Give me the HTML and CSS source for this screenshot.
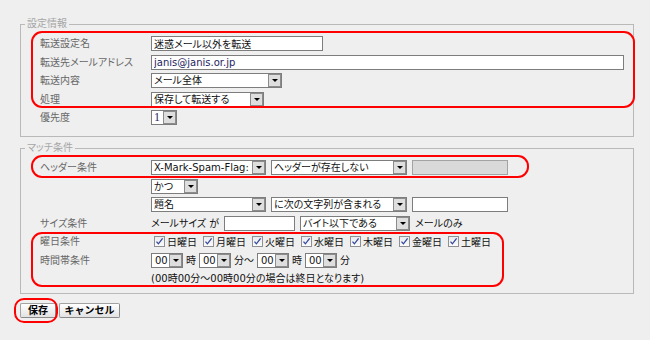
FILE: index.html
```html
<!DOCTYPE html>
<html lang="ja">
<head>
<meta charset="utf-8">
<title>転送設定</title>
<link rel="stylesheet" href="styles.css">
</head>
<body>
<div class="page">
  <fieldset class="box box-top">
    <legend>設定情報</legend>
    <div class="rows">
      <div class="group mark mark-a">
        <div class="row"><span class="lbl">転送設定名</span><div class="ctl"><input class="inp w-name" type="text" value="迷惑メール以外を転送"></div></div>
        <div class="row"><span class="lbl">転送先メールアドレス</span><div class="ctl"><input class="inp w-addr addr" type="text" value="janis@janis.or.jp"></div></div>
        <div class="row"><span class="lbl">転送内容</span><div class="ctl"><span class="sel w-content"><span class="val">メール全体</span><span class="arr"></span></span></div></div>
        <div class="row"><span class="lbl">処理</span><div class="ctl"><span class="sel w-action"><span class="val">保存して転送する</span><span class="arr"></span></span></div></div>
      </div>
      <div class="row"><span class="lbl">優先度</span><div class="ctl"><span class="sel w-pri serif"><span class="val">1</span><span class="arr"></span></span></div></div>
    </div>
  </fieldset>

  <fieldset class="box box-match">
    <legend>マッチ条件</legend>
    <div class="rows">
      <div class="group mark mark-b">
        <div class="row"><span class="lbl">ヘッダー条件</span><div class="ctl">
          <span class="sel w-head"><span class="val">X-Mark-Spam-Flag:</span><span class="arr"></span></span>
          <span class="sel w-cond"><span class="val">ヘッダーが存在しない</span><span class="arr"></span></span>
          <input class="inp w-text" type="text" value="" disabled>
        </div></div>
      </div>
      <div class="row"><span class="lbl"></span><div class="ctl"><span class="sel w-and"><span class="val">かつ</span><span class="arr"></span></span></div></div>
      <div class="row"><span class="lbl"></span><div class="ctl">
        <span class="sel w-head"><span class="val">題名</span><span class="arr"></span></span>
        <span class="sel w-cond"><span class="val">に次の文字列が含まれる</span><span class="arr"></span></span>
        <input class="inp w-text" type="text" value="">
      </div></div>
      <div class="row"><span class="lbl">サイズ条件</span><div class="ctl">
        <span class="txt">メールサイズ が</span>
        <input class="inp w-size" type="text" value="">
        <span class="sel w-unit"><span class="val">バイト以下である</span><span class="arr"></span></span>
        <span class="txt">メールのみ</span>
      </div></div>
      <div class="group mark mark-c">
        <div class="row"><span class="lbl">曜日条件</span><div class="ctl days">
          <label class="chk"><span class="cb"><svg viewBox="0 0 9 9" width="9" height="9"><path d="M1.5 4.6 L3.4 6.8 L7.6 1.4" fill="none" stroke="#34479a" stroke-width="1.3"/></svg></span>日曜日</label>
          <label class="chk"><span class="cb"><svg viewBox="0 0 9 9" width="9" height="9"><path d="M1.5 4.6 L3.4 6.8 L7.6 1.4" fill="none" stroke="#34479a" stroke-width="1.3"/></svg></span>月曜日</label>
          <label class="chk"><span class="cb"><svg viewBox="0 0 9 9" width="9" height="9"><path d="M1.5 4.6 L3.4 6.8 L7.6 1.4" fill="none" stroke="#34479a" stroke-width="1.3"/></svg></span>火曜日</label>
          <label class="chk"><span class="cb"><svg viewBox="0 0 9 9" width="9" height="9"><path d="M1.5 4.6 L3.4 6.8 L7.6 1.4" fill="none" stroke="#34479a" stroke-width="1.3"/></svg></span>水曜日</label>
          <label class="chk"><span class="cb"><svg viewBox="0 0 9 9" width="9" height="9"><path d="M1.5 4.6 L3.4 6.8 L7.6 1.4" fill="none" stroke="#34479a" stroke-width="1.3"/></svg></span>木曜日</label>
          <label class="chk"><span class="cb"><svg viewBox="0 0 9 9" width="9" height="9"><path d="M1.5 4.6 L3.4 6.8 L7.6 1.4" fill="none" stroke="#34479a" stroke-width="1.3"/></svg></span>金曜日</label>
          <label class="chk"><span class="cb"><svg viewBox="0 0 9 9" width="9" height="9"><path d="M1.5 4.6 L3.4 6.8 L7.6 1.4" fill="none" stroke="#34479a" stroke-width="1.3"/></svg></span>土曜日</label>
        </div></div>
        <div class="row"><span class="lbl">時間帯条件</span><div class="ctl times">
          <span class="sel w-time"><span class="val">00</span><span class="arr"></span></span>
          <span class="txt">時</span>
          <span class="sel w-time"><span class="val">00</span><span class="arr"></span></span>
          <span class="txt">分〜</span>
          <span class="sel w-time"><span class="val">00</span><span class="arr"></span></span>
          <span class="txt">時</span>
          <span class="sel w-time"><span class="val">00</span><span class="arr"></span></span>
          <span class="txt">分</span>
        </div></div>
        <div class="row"><span class="lbl"></span><div class="ctl"><span class="txt">(00時00分〜00時00分の場合は終日となります)</span></div></div>
      </div>
    </div>
  </fieldset>

  <div class="actions">
    <span class="mark mark-d"><button class="btn btn-save" type="button">保存</button></span>
    <button class="btn btn-cancel" type="button">キャンセル</button>
  </div>
</div>
</body>
</html>
```

FILE: styles.css
```css
* { box-sizing: border-box; }
html, body { margin: 0; padding: 0; background: #efefef; }
body {
  width: 650px;
  height: 340px;
  overflow: hidden;
  font-family: "DejaVu Sans", "Noto Sans CJK JP", sans-serif;
  font-size: 10px;
  font-feature-settings: "palt" 1;
  color: #111;
}
.page { padding: 18px 0 0 20px; width: 634px; }

fieldset.box {
  margin: 0;
  padding: 6px 0 11px 0;
  border: 1px solid #b9b9b9;
  width: 614px;
  min-width: 0;
}
fieldset.box-match { margin-top: 5px; padding-bottom: 7px; }
legend {
  margin-left: 4px;
  padding: 0 2px;
  font-size: 10px;
  line-height: 12px;
  color: #a6a6a6;
}

.rows { display: flex; flex-direction: column; gap: 3.5px; padding-left: 19px; }
.group { display: flex; flex-direction: column; gap: 3.5px; position: relative; }
.row { display: flex; align-items: center; height: 15px; }
.lbl { width: 111px; flex: none; color: #676767; line-height: 15px; white-space: nowrap; }
.ctl { display: flex; align-items: center; gap: 5px; height: 15px; }
.txt { white-space: nowrap; line-height: 15px; }

.inp {
  height: 15px;
  padding: 0 2px;
  margin: 0;
  border: 1px solid #7d7d7d;
  background: #fff;
  font: inherit;
  font-feature-settings: "palt" 1;
  color: #111;
  outline: none;
}
.inp:disabled { background: #d9d9d9; border-color: #a3a3a3; }
.addr { color: #1e2460; }

.sel {
  display: flex;
  align-items: center;
  height: 15px;
  border: 1px solid #7d7d7d;
  background: #fff;
  padding-left: 2px;
  flex: none;
}
.sel .val { flex: 1; white-space: nowrap; overflow: hidden; line-height: 13px; }
.sel .arr {
  flex: none;
  width: 13px;
  height: 13px;
  border: 1px solid #8c8c8c;
  background: #dedede;
  display: flex;
  align-items: center;
  justify-content: center;
}
.sel .arr::after {
  content: "";
  width: 0;
  height: 0;
  border-left: 3px solid transparent;
  border-right: 3px solid transparent;
  border-top: 3px solid #000;
}
.serif .val { font-family: "Liberation Serif", serif; font-size: 12px; color: #1e2460; }

.w-name { width: 172px; }
.w-addr { width: 473px; }
.w-content { width: 131px; }
.w-action { width: 113px; }
.w-pri { width: 26px; }
.w-head { width: 115px; }
.w-cond { width: 136px; }
.w-text { width: 96px; }
.w-and { width: 47px; }
.w-size { width: 71px; }
.w-unit { width: 110px; }
.w-time { width: 32px; padding-left: 3px; }
.times { gap: 3px; }

.days { gap: 3px; }
.chk { display: flex; align-items: center; gap: 2px; white-space: nowrap; }
.cb {
  width: 11px;
  height: 11px;
  margin-left: 3px;
  border: 1px solid #8f9094;
  background: linear-gradient(#e9ebef, #fbfbfc);
  display: flex;
  align-items: center;
  justify-content: center;
}
.cb svg { display: block; }

.mark { position: relative; }
.mark::before {
  content: "";
  position: absolute;
  border: 2px solid #f00;
  border-radius: 11px;
  pointer-events: none;
}
.mark-a::before { top: -5px; left: -9px; right: -2px; bottom: -1px; }
.mark-b::before { top: -5px; left: -9px; width: 494px; bottom: -3px; }
.mark-c::before { top: -2px; left: -9px; width: 469px; bottom: -1px; }
.mark-d { display: inline-flex; }
.mark-d::before { top: -5px; left: -6px; right: -2px; bottom: -5px; border-radius: 10px; }

.actions { display: flex; gap: 3px; margin-top: 9px; align-items: center; }
.btn {
  height: 15px;
  padding: 0;
  margin: 0;
  border: 1px solid #a2a2a2;
  border-right-color: #8a8a8a;
  border-bottom-color: #8a8a8a;
  border-radius: 2px;
  background: linear-gradient(#ffffff, #e2e2e2);
  font-family: "DejaVu Sans", "Noto Sans CJK JP", sans-serif;
  font-size: 10px;
  font-weight: bold;
  line-height: 13px;
  color: #000;
}
.btn-save { width: 36px; }
.btn-cancel { width: 61px; }
```
